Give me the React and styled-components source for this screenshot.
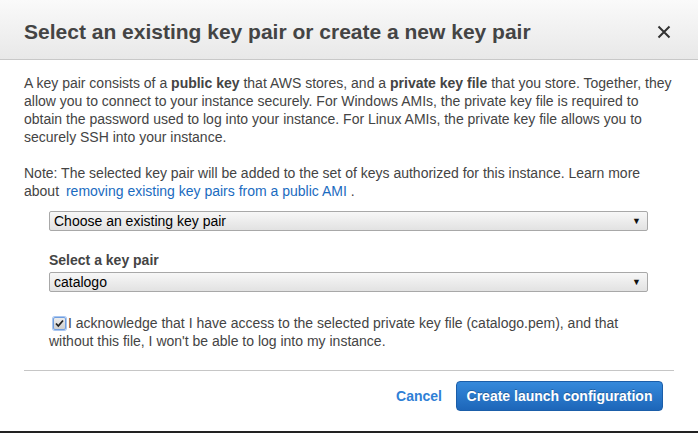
import React from 'react'
import styled, { createGlobalStyle } from 'styled-components'

const Global = createGlobalStyle`
  html, body { margin: 0; padding: 0; background: #fff; }
  body { font-family: 'Liberation Sans', Arial, sans-serif; }
`

const Dialog = styled.div`
  width: 698px;
  height: 433px;
  box-sizing: border-box;
  border-bottom: 2px solid #222;
  background: #fff;
  display: flex;
  flex-direction: column;
`

const Header = styled.div`
  height: 60px;
  box-sizing: border-box;
  padding: 0 24px;
  display: flex;
  align-items: center;
  justify-content: space-between;
  background: linear-gradient(#fafafa, #e8e8e8);
  border-bottom: 1px solid #c8c8c8;
`

const Title = styled.h1`
  margin: 0;
  padding-top: 4px;
  font-size: 21px;
  font-weight: 700;
  color: #444;
`

const Close = styled.button`
  border: 0;
  background: none;
  padding: 0;
  margin-right: 3px;
  margin-top: 5px;
  width: 14px;
  height: 14px;
  display: flex;
`

const Body = styled.div`
  padding: 14px 24px 0;
  color: #444;
  font-size: 14px;
  line-height: 18px;
`

const Para = styled.p`
  margin: 0 0 ${p => p.$gap || 0}px;
`

const Link = styled.a`
  color: #1a6bc0;
  text-decoration: none;
  margin-left: 3px;
`

const Form = styled.div`
  padding: 0 26px 0 25px;
  display: flex;
  flex-direction: column;
`

const Select = styled.div`
  height: 20px;
  box-sizing: border-box;
  border: 1px solid #a8a8a8;
  border-radius: 2px;
  background: linear-gradient(#f7f7f7, #e2e2e2);
  display: flex;
  align-items: center;
  justify-content: space-between;
  padding: 0 6px 0 4px;
  color: #000;
  font-size: 14px;
`

const Arrow = styled.span`
  font-size: 9px;
  color: #111;
`

const Label = styled.div`
  margin: 20px 0 3px;
  font-weight: 700;
  color: #444;
`

const Ack = styled.label`
  margin-top: 22px;
  display: block;
  color: #444;
`

const Check = styled.span`
  display: inline-block;
  vertical-align: -2px;
  width: 13px;
  height: 13px;
  box-sizing: border-box;
  margin: 0 2px 0 4px;
  border: 1px solid #6f9ee0;
  border-radius: 2px;
  box-shadow: 0 0 0 1px #a9c6f0;
  background: linear-gradient(#ececec, #cfcfcf);
  position: relative;
  svg { position: absolute; left: 1px; top: 1px; }
`

const Divider = styled.hr`
  margin: 20px 0 0;
  border: 0;
  border-top: 1px solid #c6c6c6;
`

const Footer = styled.div`
  display: flex;
  justify-content: flex-end;
  align-items: center;
  gap: 14px;
  padding: 10px 11px 0 0;
`

const Cancel = styled.a`
  color: #2f80d6;
  font-weight: 700;
  font-size: 14px;
`

const Primary = styled.button`
  height: 30px;
  width: 207px;
  border: 1px solid #1b5ea9;
  border-radius: 4px;
  background: linear-gradient(#3589db, #1d66b9);
  color: #fff;
  font-family: 'Liberation Sans', Arial, sans-serif;
  font-weight: 700;
  font-size: 14px;
  text-shadow: 0 -1px 0 rgba(0,0,0,0.25);
  padding: 0;
`

export default function App() {
  return (
    <>
      <Global />
      <Dialog>
        <Header>
          <Title>Select an existing key pair or create a new key pair</Title>
          <Close aria-label="close">
            <svg width="14" height="14" viewBox="0 0 14 14">
              <path d="M1.5 1.5 L12.5 12.5 M12.5 1.5 L1.5 12.5" stroke="#333" strokeWidth="2" />
            </svg>
          </Close>
        </Header>
        <Body>
          <Para $gap={18}>
            A key pair consists of a <b>public key</b> that AWS stores, and a <b>private key file</b> that you store. Together, they allow you to connect to your instance securely. For Windows AMIs, the private key file is required to obtain the password used to log into your instance. For Linux AMIs, the private key file allows you to securely SSH into your instance.
          </Para>
          <Para $gap={11}>
            Note: The selected key pair will be added to the set of keys authorized for this instance. Learn more about <Link>removing existing key pairs from a public AMI</Link> .
          </Para>
          <Form>
            <Select>
              <span>Choose an existing key pair</span>
              <Arrow>▼</Arrow>
            </Select>
            <Label>Select a key pair</Label>
            <Select>
              <span>catalogo</span>
              <Arrow>▼</Arrow>
            </Select>
            <Ack>
              <Check>
                <svg width="9" height="9" viewBox="0 0 9 9">
                  <path d="M1 4.5 L3.3 7 L8 1.5" stroke="#222" strokeWidth="1.8" fill="none" />
                </svg>
              </Check>
              I acknowledge that I have access to the selected private key file (catalogo.pem), and that without this file, I won't be able to log into my instance.
            </Ack>
          </Form>
          <Divider />
          <Footer>
            <Cancel>Cancel</Cancel>
            <Primary>Create launch configuration</Primary>
          </Footer>
        </Body>
      </Dialog>
    </>
  )
}
